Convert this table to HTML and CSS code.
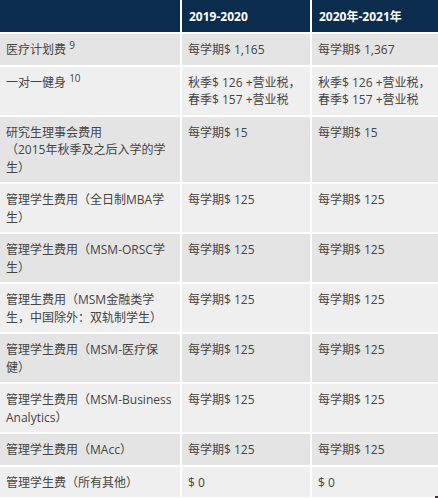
FILE: index.html
```html
<!DOCTYPE html>
<html lang="zh-CN">
<head>
<meta charset="utf-8">
<title>费用表</title>
<link rel="stylesheet" href="styles.css">
</head>
<body>
<table class="fees">
  <colgroup>
    <col class="c1"><col class="c2"><col class="c3">
  </colgroup>
  <thead>
    <tr><th></th><th>2019-2020</th><th>2020年-2021年</th></tr>
  </thead>
  <tbody>
    <tr><td>医疗计划费 <sup>9</sup></td><td>每学期$ 1,165</td><td>每学期$ 1,367</td></tr>
    <tr><td>一对一健身 <sup>10</sup></td><td>秋季$ 126 +营业税，春季$ 157 +营业税</td><td>秋季$ 126 +营业税，春季$ 157 +营业税</td></tr>
    <tr><td>研究生理事会费用<br>（2015年秋季及之后入学的学<br>生）</td><td>每学期$ 15</td><td>每学期$ 15</td></tr>
    <tr><td>管理学生费用（全日制MBA学生）</td><td>每学期$ 125</td><td>每学期$ 125</td></tr>
    <tr><td>管理学生费用（MSM-ORSC学生）</td><td>每学期$ 125</td><td>每学期$ 125</td></tr>
    <tr><td>管理生费用（MSM金融类学生，中国除外：双轨制学生）</td><td>每学期$ 125</td><td>每学期$ 125</td></tr>
    <tr><td>管理学生费用（MSM-医疗保健）</td><td>每学期$ 125</td><td>每学期$ 125</td></tr>
    <tr><td>管理学生费用（MSM-Business Analytics）</td><td>每学期$ 125</td><td>每学期$ 125</td></tr>
    <tr><td>管理学生费用（MAcc）</td><td>每学期$ 125</td><td>每学期$ 125</td></tr>
    <tr><td>管理学生费（所有其他）</td><td>$ 0</td><td>$ 0</td></tr>
  </tbody>
</table>
<div class="corner"></div>
</body>
</html>
```

FILE: styles.css
```css
html, body {
  margin: 0;
  padding: 0;
  background: #ffffff;
}
body {
  position: relative;
  width: 438px;
  height: 498px;
  overflow: hidden;
  font-family: "Open Sans", "Noto Sans CJK SC", sans-serif;
  font-size: 12px;
  color: #454545;
}
.fees {
  width: 438px;
  table-layout: fixed;
  border-collapse: collapse;
}
.c1 { width: 181px; }
.c2 { width: 130px; }
.c3 { width: 127px; }
.fees th {
  background: #0c2c4d;
  color: #ffffff;
  font-weight: 700;
  text-align: left;
  height: 33px;
  padding: 0 7px;
  box-sizing: border-box;
  border-left: 2px solid #ffffff;
  line-height: 17px;
}
.fees th:first-child { border-left: 0; }
.fees td {
  vertical-align: top;
  text-align: left;
  padding: 7px 6px 6px;
  line-height: 17.5px;
  border-top: 2px solid #ffffff;
  border-left: 2px solid #ffffff;
}
.fees td:first-child { border-left: 0; }
.fees tbody tr:nth-child(odd) td { background: #e4e4e4; }
.fees tbody tr:nth-child(even) td { background: #efefef; }
.fees sup {
  font-size: 10px;
  line-height: 0;
  vertical-align: 5px;
}
.corner {
  position: absolute;
  right: 0;
  bottom: 0;
  width: 3px;
  height: 2px;
  background: #a40c0c;
}
```
